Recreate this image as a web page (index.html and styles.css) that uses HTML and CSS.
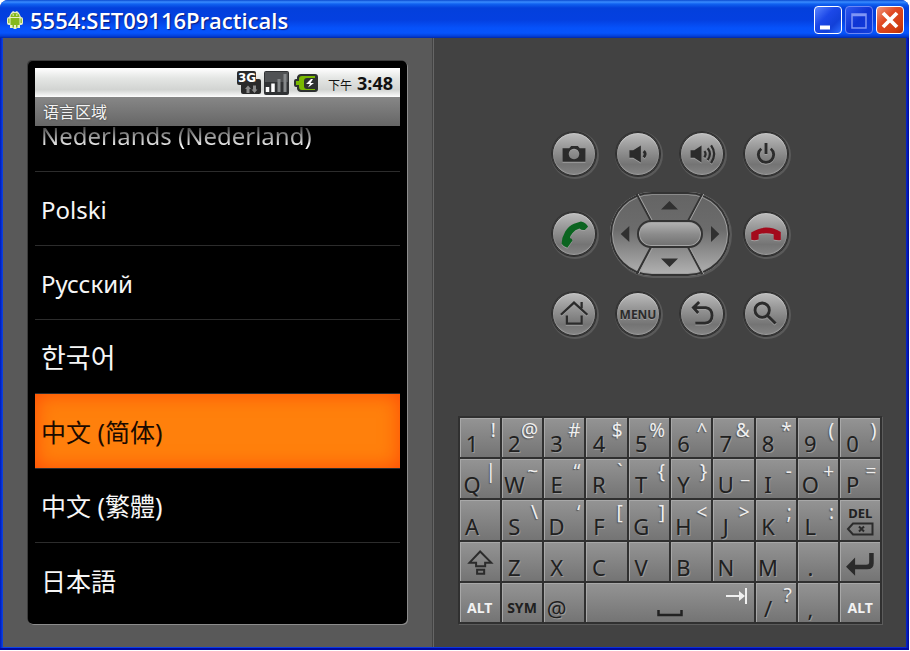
FILE: index.html
```html
<!DOCTYPE html>
<html lang="en">
<head>
<meta charset="utf-8">
<title>5554:SET09116Practicals</title>
<link rel="stylesheet" href="styles.css">
</head>
<body>
<div class="window">
  <header class="titlebar">
    <svg class="app-icon" viewBox="0 0 16 18" aria-hidden="true">
      <path d="M2 6 Q0 6 0 8 V12 Q0 14 2 14 H3 V17 H6.500 V18 H9.500 V17 H13 V14 H14 Q16 14 16 12 V8 Q16 6 14 6 L12 2 L10 0 L8 1 L6 0 L4 2Z" fill="#e8f0c8"/>
      <path d="M3.500 6 Q3.500 2 8 2 Q12.500 2 12.500 6Z M3.500 7 H12.500 V14 H10.500 V16.500 H9 V14 H7 V16.500 H5.500 V14 H3.500Z M1.200 7.500 H2.500 V12 H1.200Z M13.500 7.500 H14.800 V12 H13.500Z" fill="#86b81b"/>
      <path d="M5.500 4 H7 M9 4 H10.500" stroke="#fff" stroke-width="1"/>
    </svg>
    <h1>5554:SET09116Practicals</h1>
    <div class="controls">
      <button class="ctl" aria-label="Minimize"><svg viewBox="0 0 26 26"><path d="M5 20.500H15" stroke="#fff" stroke-width="4"/></svg></button>
      <button class="ctl dim" aria-label="Maximize"><svg viewBox="0 0 26 26"><path d="M6 7H20V21H6Z M6 8.500H20" fill="none" stroke="#7f95f5" stroke-width="1.500"/></svg></button>
      <button class="ctl close" aria-label="Close"><svg viewBox="0 0 26 26"><path d="M6 6L20 20M20 6L6 20" stroke="#fff" stroke-width="3.800"/></svg></button>
    </div>
  </header>
  <div class="body">
    <main class="device">
      <div class="phone">
        <div class="status">
          <svg class="ico-3g" viewBox="0 0 24 24" role="img" aria-label="3G">
            <rect x="4" y="8" width="20" height="15" rx="2" fill="#2a2a2a"/>
            <rect x="0" y="0" width="19" height="14" rx="2" fill="#2a2a2a"/>
            <text x="1" y="11" class="g3">3G</text>
            <path d="M8 18L11 14.500L14 18H12.500V22H9.500V18Z M14.500 18.500L17.500 22L20.500 18.500H19V14.500H16V18.500Z" fill="#8a8a8a"/>
          </svg>
          <svg class="ico-signal" viewBox="0 0 25 24" aria-hidden="true">
            <rect x="0" y="0" width="25" height="24" rx="2" fill="#303234"/>
            <rect x="1" y="1" width="23" height="10" fill="#505254"/>
            <path d="M3.500 21V16M9 21V12.500" stroke="#fff" stroke-width="3.500"/>
            <path d="M15 21V8M21 21V3" stroke="#85888a" stroke-width="3"/>
          </svg>
          <svg class="ico-battery" viewBox="0 0 24 18" aria-hidden="true">
            <path d="M7 0H21Q24 0 24 3V15Q24 18 21 18H7Q4 18 3 15V13H2Q0 13 0 11V7Q0 5 2 5H3V3Q4 0 7 0Z" fill="#2e3130"/>
            <path d="M8 2H21V16H8Q5 16 5 13V11H2V7H5V5Q5 2 8 2Z" fill="#79b800"/>
            <path d="M10 7Q10 4 13 4H22V15H13Q10 15 10 12Z" fill="#2e3130"/>
            <path d="M17 5L12 10H16L14 13.500L20 9H16.500L19 5Z" fill="#fff"/>
          </svg>
          <span class="ampm" lang="zh-CN">下午</span>
          <time>3:48</time>
        </div>
        <h2 class="apptitle" lang="zh-CN">语言区域</h2>
        <ul class="langs">
          <li class="cut"><button>Nederlands (Nederland)</button></li>
          <li><button>Polski</button></li>
          <li><button lang="ru">Русский</button></li>
          <li><button lang="ko">한국어</button></li>
          <li class="sel"><button lang="zh-CN">中文 (简体)</button></li>
          <li><button lang="zh-TW">中文 (繁體)</button></li>
          <li><button lang="ja">日本語</button></li>
        </ul>
      </div>
    </main>
    <aside class="panel">
      <div class="pad">
        <button class="round" aria-label="Camera"><svg viewBox="0 0 44 44"><path class="ink" fill-rule="evenodd" d="M10 16H17L19 13.500H26L28 16H34V30H10Z M22 16.500A5.500 5.500 0 1 0 22.010 16.500Z"/></svg></button>
        <button class="round" aria-label="Volume down"><svg viewBox="0 0 44 44"><path class="ink" d="M13 18H17L25 13V31L17 26H13Z"/><path class="line" d="M28 19Q31 22 28 25.500"/></svg></button>
        <button class="round" aria-label="Volume up"><svg viewBox="0 0 44 44"><path class="ink" d="M10 18H14L21.500 13V31L14 26H10Z"/><path class="line thin" d="M24.500 19Q27 22 24.500 25.500M28 16Q32.500 22 28 28.500M31.500 13Q38 22 31.500 31.500"/></svg></button>
        <button class="round" aria-label="Power"><svg viewBox="0 0 44 44"><path class="line" d="M17 16.500A8 8 0 1 0 27 16.500"/><path class="line" d="M22 10.500V22"/></svg></button>

        <button class="round" aria-label="Call"><svg viewBox="0 0 44 44"><path fill="#0b6420" d="M9 32.300Q9 26 12.700 19.700Q16.500 13.500 22 11.300L29.300 9Q35 10.500 36.700 14.300L33.300 17.700Q30.500 18.500 27.700 16.300Q23 17.500 20.300 21.300Q18 24 17.700 26.300Q20.500 27 20.300 29L15 36.300Q11.500 36 9 32.300Z"/></svg></button>
        <div class="dpad">
          <svg viewBox="0 0 120 84" aria-hidden="true">
            <path d="M26.700 2L41 29M92.300 2L78 29M41 55L26.700 82M78 55L92.300 82" stroke="#333" stroke-width="2"/>
            <path d="M28.200 2L42 28M93.800 2L80 28M42.500 56L28.700 82M79.500 55L93.800 82" stroke="#a2a2a2" stroke-width="1"/>
            <path fill="#303030" d="M59.500 9L51 17.500H68Z M59.500 75L51 66.500H68Z M10.700 42L19.300 34V50Z M109.300 42L101 34V50Z"/>
          </svg>
          <button class="up" aria-label="Up"></button>
          <button class="left" aria-label="Left"></button>
          <button class="ok" aria-label="Select"></button>
          <button class="right" aria-label="Right"></button>
          <button class="down" aria-label="Down"></button>
        </div>
        <button class="round" aria-label="End call"><svg viewBox="0 0 44 44"><path fill="#a30a1c" d="M6.500 28V20.500Q14 15.300 22 15.300Q30 15.300 37.500 20V28.300Q34 29 30 27.700V22.300Q22 20 14.300 22.300V27.700Q10 29 6.500 28Z"/></svg></button>

        <button class="round" aria-label="Home"><svg viewBox="0 0 44 44"><path class="line thin" d="M8.300 22.800L22 10L36 22.800M30 9.300V16M14.500 23.500V32H30V23.500"/></svg></button>
        <button class="round menu">MENU</button>
        <button class="round" aria-label="Back"><svg viewBox="0 0 44 44"><path class="line" d="M19 9.500L13 15.300L18 21M13 15.300H26Q32.500 16.500 32.500 23.500Q32.500 31 25 31.500H15"/></svg></button>
        <button class="round" aria-label="Search"><svg viewBox="0 0 44 44"><circle class="line" cx="18" cy="18" r="7.500"/><path class="line" d="M23.500 23.500L32 32"/></svg></button>
      </div>

      <div class="keys">
        <button><b>1</b><i>!</i></button><button><b>2</b><i>@</i></button><button><b>3</b><i>#</i></button><button><b>4</b><i>$</i></button><button><b>5</b><i>%</i></button><button><b>6</b><i>^</i></button><button><b>7</b><i>&amp;</i></button><button><b>8</b><i>*</i></button><button><b>9</b><i>(</i></button><button><b>0</b><i>)</i></button>
        <button><b>Q</b><i>|</i></button><button><b>W</b><i>~</i></button><button><b>E</b><i>“</i></button><button><b>R</b><i>`</i></button><button><b>T</b><i>{</i></button><button><b>Y</b><i>}</i></button><button><b>U</b><i>_</i></button><button><b>I</b><i>-</i></button><button><b>O</b><i>+</i></button><button><b>P</b><i>=</i></button>
        <button><b>A</b></button><button><b>S</b><i>\</i></button><button><b>D</b><i>‘</i></button><button><b>F</b><i>[</i></button><button><b>G</b><i>]</i></button><button><b>H</b><i>&lt;</i></button><button><b>J</b><i>&gt;</i></button><button><b>K</b><i>;</i></button><button><b>L</b><i>:</i></button>
        <button class="del"><span>DEL</span><svg viewBox="0 0 28 14" aria-hidden="true"><path class="line" d="M2 7L7 1.500H26.500V12.500H7Z"/><path class="line" d="M13 4.500L18 9.500M18 4.500L13 9.500"/></svg></button>
        <button class="pic" aria-label="Shift"><svg viewBox="0 0 40 39"><path class="line" d="M20 9.500L31 20.500H25V24H16V20.500H9.500Z M17 27.500H24V31.500H17Z"/></svg></button><button><b>Z</b></button><button><b>X</b></button><button><b>C</b></button><button><b>V</b></button><button><b>B</b></button><button><b>N</b></button><button><b>M</b></button><button><b>.</b></button>
        <button class="pic" aria-label="Enter"><svg viewBox="0 0 40 39"><path class="ink" d="M6 24.500L15 15.500V22.500H26Q29 22.500 29 20V11H33.500V21Q33.500 27 27 27H15V33.500Z"/></svg></button>
        <button class="word light">ALT</button><button class="word">SYM</button><button><b>@</b></button>
        <button class="space" aria-label="Space">
          <svg class="bar" viewBox="0 0 26 8" aria-hidden="true"><path d="M1.500 1V6H24.500V1" fill="none" stroke="#222" stroke-width="2.500"/></svg>
          <svg class="tab" viewBox="0 0 22 18" aria-hidden="true"><path d="M0 9H14M20 1V17" fill="none" stroke="#f0f0f0" stroke-width="2"/><path d="M13 4L19 9L13 14Z" fill="#f0f0f0"/></svg>
        </button>
        <button><b>/</b><i>?</i></button><button><b>,</b></button><button class="word light">ALT</button>
      </div>
    </aside>
  </div>
</div>
</body>
</html>
```
FILE: styles.css
```css
* { box-sizing: border-box; }
body {
  margin: 0;
  background: #fff;
  font-family: "Noto Sans", "Noto Sans CJK SC", sans-serif;
}
h1, h2, ul { margin: 0; padding: 0; }
ul { list-style: none; }
button {
  margin: 0;
  padding: 0;
  border: 0;
  background: none;
  font: inherit;
  color: inherit;
}
svg { display: block; }

.window {
  display: flex;
  flex-direction: column;
  min-height: calc(100vh - 1px);
  margin-right: 1px;
  padding: 0 3px 3px;
  border-radius: 8px 8px 0 0;
  background: linear-gradient(90deg, #0018b8, #0a46e8 3px, #0a28d0 calc(100% - 3px), #000c90);
  box-shadow: inset 0 -2px 0 #0008a0;
  overflow: hidden;
}
.titlebar {
  display: flex;
  align-items: center;
  height: 38px;
  margin: 0 -3px;
  padding: 2px 5px 0 7px;
  background: linear-gradient(#0a4ad0 0, #3a8cff 2px, #1062f0 4px, #0340dc 8px, #0440e0 20px, #0652fa 28px, #0654fc 33px, #0440d8 36px, #0028a8 38px);
}
.app-icon { width: 16px; height: 18px; }
h1 {
  flex: 1;
  margin-left: 7px;
  font: 600 22px/26px "Open Sans", sans-serif;
  color: #fff;
  text-shadow: 1px 1px 1px #0a1a80;
}
.controls { display: flex; gap: 3px; }
.ctl {
  width: 28px;
  height: 28px;
  border: 1px solid #fff;
  border-radius: 4px;
  background: linear-gradient(135deg, #5a86ff, #1c48e8 40%, #1240d8 70%, #2c6cff);
}
.ctl.dim { border-color: #6c88f4; background: linear-gradient(135deg, #2f5af0, #0f34d4 50%, #1040e0); }
.ctl.close { background: linear-gradient(135deg, #f09880, #e04a24 40%, #d03c10 80%, #b02c08); }

.body {
  display: grid;
  grid-template-columns: minmax(0, 430fr) minmax(0, 473fr);
  flex: 1;
}
.device {
  padding: 23px 25px;
  background: #595959;
  border-right: 1px solid #444;
}
.phone {
  display: flex;
  flex-direction: column;
  height: 563px;
  padding: 7px;
  background: #000;
  border-radius: 5px;
  box-shadow: 1px 1px 0 #8c8c8c, -1px -1px 0 #3c3c3c;
}
.status {
  display: flex;
  align-items: center;
  height: 29px;
  padding-right: 7px;
  justify-content: flex-end;
  background: linear-gradient(#fff, #e4e6e4 35%, #d2d4d2 75%, #f4f4f4 95%, #fff);
  color: #111;
}
.ico-3g { width: 24px; height: 24px; }
.ico-signal { width: 25px; height: 24px; margin-left: 3px; }
.ico-battery { width: 24px; height: 18px; margin-left: 5px; }
.g3 { font: 700 12px "DejaVu Sans", sans-serif; fill: #fff; }
.ampm { margin: 4px 5px 0 10px; font: 12px/20px "Noto Sans CJK SC", sans-serif; }
time { font: 700 18px/24px "Open Sans", sans-serif; }
.apptitle {
  height: 29px;
  padding-left: 8px;
  background: linear-gradient(#878787, #666);
  font: 400 16px/28px "Noto Sans CJK SC", sans-serif;
  color: #f4f4f4;
  text-shadow: 0 0 2px #333;
}
.langs {
  flex: 1;
  display: grid;
  grid-template-rows: 46px repeat(6, 1fr);
}
.langs button {
  display: block;
  width: 100%;
  height: 100%;
  padding: 2px 0 0 6px;
  text-align: left;
  font-size: 24px;
  line-height: 32px;
  color: #f6f6f6;
}
.langs li { border-bottom: 1px solid #2c2c2c; }
.langs li:last-child { border: 0; }
.langs .cut {
  display: flex;
  align-items: flex-end;
  overflow: hidden;
}
.langs .cut button {
  flex: none;
  height: 72px;
  background: linear-gradient(#444 28px, #fff 48px);
  -webkit-background-clip: text;
  background-clip: text;
  color: transparent;
}
.langs .sel button {
  background: #ff800c;
  box-shadow: inset 0 0 20px #ff4a06;
  color: #1a0a00;
}
.langs [lang="ko"] { font-family: "Noto Sans", "Noto Sans CJK KR", sans-serif; font-size: 27px; }
.langs [lang="zh-CN"] { font-size: 25px; }
.langs [lang="zh-TW"] { font-family: "Noto Sans", "Noto Sans CJK TC", sans-serif; font-size: 25px; }
.langs [lang="ja"] { font-family: "Noto Sans", "Noto Sans CJK JP", sans-serif; font-size: 25px; }

.panel {
  display: flex;
  flex-direction: column;
  align-items: center;
  padding-top: 94px;
  background: #424242;
  border-left: 1px solid #666;
}
.pad {
  display: grid;
  grid-template-columns: repeat(4, 44px);
  gap: 16px 20px;
  align-items: center;
}
.round {
  width: 44px;
  height: 44px;
  border: 1px solid #303030;
  border-radius: 50%;
  background: linear-gradient(#bcbcbc, #989898 35%, #747474 75%, #848484);
  box-shadow: inset 0 1px 1px #c8c8c8, inset 0 -1px 1px #a0a0a0, 0 0 0 1px #303030, 1px 1px 0 2px #5a5a5a;
}
.ink { fill: #2b2b2b; }
.line { fill: none; stroke: #2b2b2b; stroke-width: 3; }
.line.thin { stroke-width: 2.4; }
.round svg { filter: drop-shadow(0 1px 0 #a0a0a0); }
.menu { font-size: 12px; font-weight: 700; color: #2b2b2b; text-shadow: 0 1px 0 #a0a0a0; }
.dpad {
  position: relative;
  grid-column: 2 / 4;
  justify-self: center;
  display: grid;
  grid-template: 28px 28px 28px / 27px 66px 27px;
  border-radius: 42px;
  background: linear-gradient(#646464, #6c6c6c 45%, #b4b4b4);
  box-shadow: inset 0 0 0 2px #333, inset 0 3px 0 #8a8a8a, inset 0 0 0 3px #a0a0a0, 1px 1px 0 1px #5a5a5a;
}
.dpad svg { position: absolute; inset: 0; }
.up { grid-area: 1 / 2; }
.left { grid-area: 2 / 1; }
.ok {
  grid-area: 2 / 2;
  position: relative;
  border: 2px solid #333;
  border-radius: 14px;
  background: linear-gradient(#b4b4b4, #8c8c8c 50%, #707070);
  box-shadow: inset 0 0 0 1px #a4a4a4;
}
.right { grid-area: 2 / 3; }
.down { grid-area: 3 / 2; }

.keys {
  display: grid;
  grid-template: repeat(5, 1fr) / repeat(10, 1fr);
  gap: 2px;
  width: 90%;
  height: 208px;
  margin-top: 80px;
  padding: 2px;
  background: #303030;
  box-shadow: 1px 1px 0 #5c5c5c;
}
.keys button {
  display: grid;
  grid-template: 100% / 100%;
  background: linear-gradient(#949494, #747474);
  box-shadow: inset 1px 1px 0 #a8a8a8;
  color: #202020;
  min-width: 0;
}
.keys b, .keys i { grid-area: 1 / 1; font-style: normal; font-weight: 400; }
.keys b {
  align-self: end;
  width: 25px;
  display: flex;
  justify-content: center;
  font-size: 22px;
  line-height: 28px;
  text-shadow: 1px 1px 0 #9a9a9a;
}
.keys i {
  align-self: start;
  justify-self: end;
  padding-right: 4px;
  font-size: 19px;
  line-height: 25px;
  color: #efefef;
  text-shadow: -1px 1px 1px #555;
}
.keys .word {
  place-items: end center;
  padding-bottom: 4px;
  font-size: 14px;
  font-weight: 700;
  line-height: 20px;
}
.keys .light { color: #f2f2f2; }
.keys .del {
  grid-template: 18px 14px / 100%;
  align-content: center;
  justify-items: center;
  font-size: 13px;
  font-weight: 700;
  line-height: 18px;
}
.del svg { width: 28px; height: 14px; }
.del .line, .pic .line { stroke-width: 2; }
.keys .space {
  grid-column: span 4;
  grid-template: 100% / 1fr auto 1fr;
}
.bar { grid-area: 1 / 2; align-self: end; width: 26px; height: 8px; margin-bottom: 5px; }
.tab { grid-area: 1 / 3; justify-self: end; width: 22px; height: 18px; margin: 4px 6px 0 0; }
```
